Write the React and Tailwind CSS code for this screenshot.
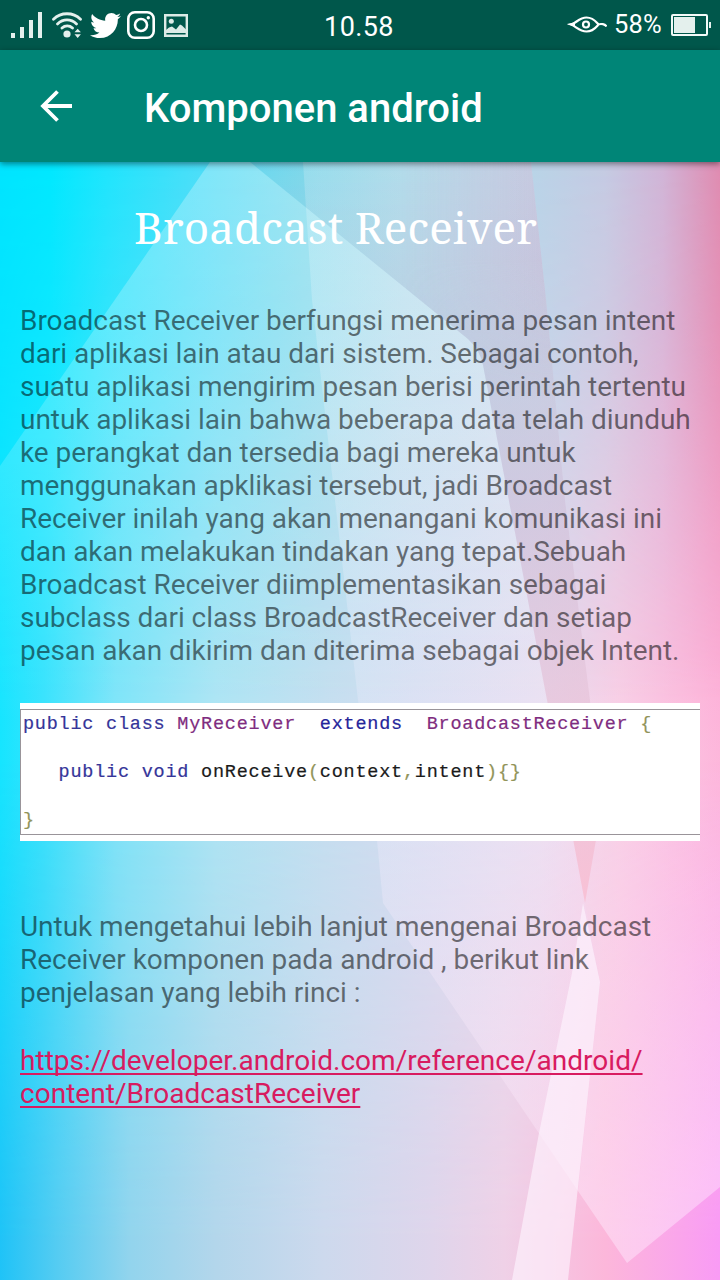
import { FaTwitter } from "react-icons/fa";

function Backdrop() {
  return (
    <svg className="absolute inset-0 h-full w-full" viewBox="0 162 720 1118" preserveAspectRatio="none" aria-hidden="true">
      <defs>
        <linearGradient id="top" gradientUnits="userSpaceOnUse" x1="0" x2="720" y1="0" y2="0">
          <stop offset="0" stopColor="#00e4ff" />
          <stop offset=".07" stopColor="#00e8ff" />
          <stop offset=".15" stopColor="#20e4fd" />
          <stop offset=".28" stopColor="#4bddf8" />
          <stop offset=".42" stopColor="#76d9ec" />
          <stop offset=".56" stopColor="#9fd6e8" />
          <stop offset=".74" stopColor="#b8d3e7" />
          <stop offset=".84" stopColor="#c4cae2" />
          <stop offset=".92" stopColor="#d0b4d6" />
          <stop offset="1" stopColor="#df8bb0" />
        </linearGradient>
        <linearGradient id="middle" gradientUnits="userSpaceOnUse" x1="0" x2="720" y1="0" y2="0">
          <stop offset="0" stopColor="#16e5ff" />
          <stop offset=".06" stopColor="#38e3fd" />
          <stop offset=".16" stopColor="#7ee5f9" />
          <stop offset=".3" stopColor="#ade5f4" />
          <stop offset=".45" stopColor="#c4dff0" />
          <stop offset=".58" stopColor="#d3dcf0" />
          <stop offset=".75" stopColor="#e7dcef" />
          <stop offset=".86" stopColor="#f8cde5" />
          <stop offset="1" stopColor="#fdb0d8" />
        </linearGradient>
        <linearGradient id="bottom" gradientUnits="userSpaceOnUse" x1="0" x2="720" y1="0" y2="0">
          <stop offset="0" stopColor="#1fc3f7" />
          <stop offset=".08" stopColor="#55ccf2" />
          <stop offset=".18" stopColor="#92d4ed" />
          <stop offset=".3" stopColor="#b3d6eb" />
          <stop offset=".45" stopColor="#cdd9ed" />
          <stop offset=".6" stopColor="#dfd5eb" />
          <stop offset=".7" stopColor="#efd1e7" />
          <stop offset=".84" stopColor="#fcb7da" />
          <stop offset="1" stopColor="#f99bf5" />
        </linearGradient>
        <linearGradient id="fadeTop" gradientUnits="userSpaceOnUse" x1="0" x2="0" y1="162" y2="700">
          <stop offset="0" stopColor="#fff" />
          <stop offset=".3" stopColor="#ccc" />
          <stop offset="1" stopColor="#000" />
        </linearGradient>
        <linearGradient id="fadeBottom" gradientUnits="userSpaceOnUse" x1="0" x2="0" y1="760" y2="1240">
          <stop offset="0" stopColor="#000" />
          <stop offset="1" stopColor="#fff" />
        </linearGradient>
        <linearGradient id="strip" gradientUnits="userSpaceOnUse" x1="0" x2="0" y1="162" y2="900">
          <stop offset="0" stopColor="#b4c4d8" stopOpacity=".1" />
          <stop offset=".25" stopColor="#b9bcd4" stopOpacity=".45" />
          <stop offset=".45" stopColor="#cabbd6" stopOpacity=".6" />
          <stop offset=".7" stopColor="#e3bfd6" stopOpacity=".65" />
          <stop offset="1" stopColor="#f9bcd0" stopOpacity=".8" />
        </linearGradient>
        <linearGradient id="rose" gradientUnits="userSpaceOnUse" x1="400" x2="545" y1="0" y2="0">
          <stop offset="0" stopColor="#c9a9cc" stopOpacity="0" />
          <stop offset="1" stopColor="#c9a9cc" stopOpacity=".35" />
        </linearGradient>
        <linearGradient id="roseFade" gradientUnits="userSpaceOnUse" x1="0" x2="0" y1="260" y2="400">
          <stop offset="0" stopColor="#fff" />
          <stop offset="1" stopColor="#000" />
        </linearGradient>
        <linearGradient id="glow" gradientUnits="userSpaceOnUse" x1="0" x2="0" y1="162" y2="720">
          <stop offset="0" stopColor="#fff" stopOpacity=".28" />
          <stop offset=".5" stopColor="#fff" stopOpacity=".17" />
          <stop offset="1" stopColor="#fff" stopOpacity="0" />
        </linearGradient>
        <linearGradient id="facet" gradientUnits="userSpaceOnUse" x1="0" x2="0" y1="162" y2="1263">
          <stop offset="0" stopColor="#fff" stopOpacity=".2" />
          <stop offset=".5" stopColor="#f4f0ff" stopOpacity=".26" />
          <stop offset="1" stopColor="#ffe8fa" stopOpacity=".4" />
        </linearGradient>
        <linearGradient id="facetRight" gradientUnits="userSpaceOnUse" x1="0" x2="0" y1="650" y2="1230">
          <stop offset="0" stopColor="#fff" stopOpacity="0" />
          <stop offset="1" stopColor="#ffecff" stopOpacity=".46" />
        </linearGradient>
        <mask id="maskTop"><rect y="162" width="720" height="1118" fill="url(#fadeTop)" /></mask>
        <mask id="maskBottom"><rect y="162" width="720" height="1118" fill="url(#fadeBottom)" /></mask>
        <mask id="maskRose"><rect y="162" width="720" height="1118" fill="url(#roseFade)" /></mask>
      </defs>
      <rect y="162" width="720" height="1118" fill="url(#middle)" />
      <rect y="162" width="720" height="1118" fill="url(#top)" mask="url(#maskTop)" />
      <rect y="162" width="720" height="1118" fill="url(#bottom)" mask="url(#maskBottom)" />
      <path d="M210 162H250L468 339Q480 350 483 365L547 700 585 903 530 903 0 900V466Z" fill="url(#glow)" />
      <path d="M303 162H531L545 290 565 500 590 700 596 840 585 903 600 982 578 1191 383 903 377 840 358 700 312 300Z" fill="url(#facet)" />
      <path d="M590 650H720V1187L627 1263 578 1191 600 982 585 903 596 840 590 700Z" fill="url(#facetRight)" />
      <path d="M250 162H531L545 290 565 500 590 700 596 840 585 903 547 700 483 365Q480 350 468 339Z" fill="url(#strip)" />
      <path d="M303 162H531L545 290 556 400H490L483 365Q480 350 468 339L309 210Z" fill="url(#rose)" mask="url(#maskRose)" />
      <path d="M583 903 600 982 568 1280H512L539 1133 572 973Z" fill="#fdf6ff" fillOpacity=".62" />
    </svg>
  );
}

function SignalIcon() {
  return (
    <svg className="h-[26px] w-8" viewBox="0 0 32 26" fill="#e4f0ed">
      <path d="M0 21h4v5H0zM9 15h4v11H9zM18 8h4v18h-4zM27 0h4v26h-4z" />
    </svg>
  );
}

function WifiIcon() {
  return (
    <svg className="h-[26px] w-[30px]" viewBox="0 0 30 26" fill="none" stroke="#e4f0ed" strokeWidth="2.8" strokeLinecap="round">
      <path d="M1.500 7.200C9-.1 21-.1 28.500 7.200M5.500 11.900c5.500-5.300 13.500-5.300 19 0M10 16c3-2.800 7.500-2.800 10.500 0" />
      <circle cx="15" cy="22" r="3.600" fill="#e4f0ed" stroke="none" />
      <path d="M22.500 20.300l3.200-3.600 3.200 3.600zM22.500 22.300l3.200 3.600 3.200-3.600z" fill="#e4f0ed" stroke="none" />
    </svg>
  );
}

function InstagramIcon() {
  return (
    <svg className="h-7 w-7" viewBox="0 0 28 28" fill="none" stroke="#fff" strokeWidth="2.600">
      <rect x="1.300" y="1.300" width="25.400" height="25.400" rx="6.500" />
      <circle cx="14" cy="14" r="6" />
      <circle cx="21.300" cy="6.700" r="1.700" fill="#fff" stroke="none" />
    </svg>
  );
}

function PictureIcon() {
  return (
    <svg className="h-[23px] w-6" viewBox="0 0 24 23">
      <path d="M1.200 1.200h21.600v20.600H1.200z" fill="none" stroke="#dcebe7" strokeWidth="2.400" />
      <circle cx="7.300" cy="7.300" r="2.500" fill="#dcebe7" />
      <path d="M2 19v-3l3-2.500 3-1 4 3 4-5 2 1 4 4V19z" fill="#dcebe7" />
    </svg>
  );
}

function EyeIcon() {
  return (
    <svg className="h-[18px] w-10" viewBox="0 0 40 18" fill="none" stroke="#fff" strokeWidth="2.200">
      <path d="M4 8.500c5-1 8-7 15.500-7 7 0 10 5 12 7-2 2-5 7-12 7-7.500 0-10-5-15.500-7zM31 8.500c3-1 7-.5 8.500 2" />
      <path d="M0 8l8-1.800v4.600z" fill="#fff" stroke="none" />
      <circle cx="19" cy="8.500" r="3" strokeWidth="2.200" />
    </svg>
  );
}

function BatteryIcon() {
  return (
    <svg className="h-[22px] w-10" viewBox="0 0 40 22">
      <rect x="1" y="1" width="35" height="20" rx="1" fill="none" stroke="#f2faf8" strokeWidth="2" />
      <path d="M3 3h21v16H3z" fill="#e4f0ed" />
      <path d="M38 8h2v6h-2z" fill="#e4f0ed" />
    </svg>
  );
}

function StatusBar() {
  return (
    <div className="grid h-[50px] grid-cols-3 items-center bg-[#00574b] text-white">
      <div className="flex items-center pl-[11px]">
        <SignalIcon />
        <div className="ml-[9px]"><WifiIcon /></div>
        <FaTwitter className="ml-2 h-[31px] w-[31px]" />
        <div className="ml-1.5"><InstagramIcon /></div>
        <div className="ml-[9px]"><PictureIcon /></div>
      </div>
      <span className="pt-[4px] pr-[2px] text-center text-[27px] leading-none tracking-[0.4px]">10.58</span>
      <div className="flex items-center justify-end pr-[9px]">
        <EyeIcon />
        <span className="ml-[7px] mr-[9px] text-[25.500px] leading-none tracking-[0.2px]">58%</span>
        <BatteryIcon />
      </div>
    </div>
  );
}

function AppBar() {
  return (
    <header className="relative z-10 flex h-28 items-center bg-[#008577] pl-10 text-white shadow-[0_2px_6px_rgba(0,0,0,0.45)]">
      <svg className="h-8 w-8" viewBox="0 0 32 32" fill="none" stroke="#fff" strokeWidth="3.800">
        <path d="M32 16H3M17.500 1.500 3 16l14.500 14.500" />
      </svg>
      <h1 className="ml-[72px] pt-1.5 text-[40px] font-medium leading-none">Komponen android</h1>
    </header>
  );
}

function CodeSample() {
  return (
    <div className="mt-9 h-[138px] bg-white py-[6px]">
      <div className="flex h-[126px] flex-col gap-6 border-y-[1.500px] border-l-[1.500px] border-[#999499] pl-[2px] pt-[3px] font-['Liberation_Mono',monospace] text-[18.500px] leading-6 tracking-[0.770px] whitespace-pre text-[#1b1b1b] [-webkit-text-stroke:0.2px_currentColor]">
        <div>
          <span className="text-[#353599]">public class </span>
          <span className="text-[#7f2d80]">MyReceiver</span>
          <span className="text-[#25259a]">{"  extends  "}</span>
          <span className="text-[#7f2d80]">BroadcastReceiver</span>
          <span className="text-[#92945a]">{" {"}</span>
        </div>
        <div>
          <span className="text-[#353599]">{"   public void "}</span>
          onReceive
          <span className="text-[#92945a]">(</span>
          context
          <span className="text-[#92945a]">,</span>
          intent
          <span className="text-[#92945a]">{"){}"}</span>
        </div>
        <div className="text-[#92945a]">{"}"}</div>
      </div>
    </div>
  );
}

const INTRO = [
  "Broadcast Receiver berfungsi menerima pesan intent",
  "dari aplikasi lain atau dari sistem. Sebagai contoh,",
  "suatu aplikasi mengirim pesan berisi perintah tertentu",
  "untuk aplikasi lain bahwa beberapa data telah diunduh",
  "ke perangkat dan tersedia bagi mereka untuk",
  "menggunakan apklikasi tersebut, jadi Broadcast",
  "Receiver inilah yang akan menangani komunikasi ini",
  "dan akan melakukan tindakan yang tepat.Sebuah",
  "Broadcast Receiver diimplementasikan sebagai",
  "subclass dari class BroadcastReceiver dan setiap",
  "pesan akan dikirim dan diterima sebagai objek Intent.",
].join("\n");

export default function App() {
  return (
    <div className="flex h-[1280px] w-[720px] flex-col overflow-hidden font-['Roboto',sans-serif]">
      <StatusBar />
      <AppBar />
      <main className="relative flex-1">
        <Backdrop />
        <div className="relative px-5 pt-[37px]">
          <h2 className="ml-[114px] whitespace-nowrap font-['Noto_Serif','DejaVu_Serif_Condensed','DejaVu_Serif',serif] text-[44px] leading-[56px] tracking-[0.1px] text-white">
            Broadcast Receiver
          </h2>
          <p className="mt-[49px] whitespace-pre text-[28px] leading-[33px] tracking-[-0.06px] text-black/54">{INTRO}</p>
          <CodeSample />
          <p className="mt-[69px] whitespace-pre text-[28px] leading-[33px] tracking-[-0.04px] text-black/54">
            {"Untuk mengetahui lebih lanjut mengenai Broadcast\nReceiver komponen pada android , berikut link\npenjelasan yang lebih rinci :"}
          </p>
          <a
            href="#broadcast-receiver"
            className="mt-[35px] block whitespace-pre text-[28px] leading-[33px] tracking-[0.03px] text-[#d81b60] underline decoration-2 underline-offset-[3px] [text-decoration-skip-ink:none]"
          >
            {"https://developer.android.com/reference/android/\ncontent/BroadcastReceiver"}
          </a>
        </div>
      </main>
    </div>
  );
}
